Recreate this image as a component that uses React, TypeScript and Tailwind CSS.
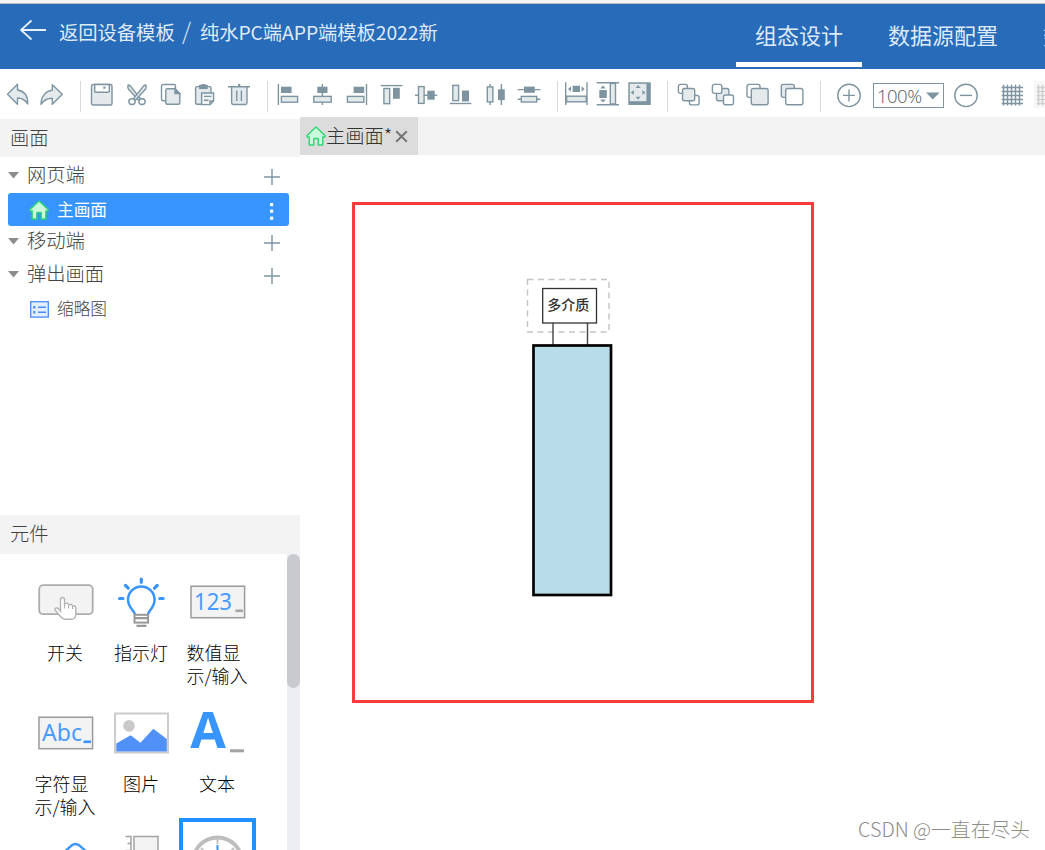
import React from 'react';

const LINE = '#7e95a1';
const FILL = '#e4eaec';

type ToolIconProps = {
  className?: string;
  children: React.ReactNode;
};

const ToolIcon: React.FC<ToolIconProps> = ({ className = '', children }) => (
  <svg
    width={24}
    height={24}
    viewBox="0 0 24 24"
    fill="none"
    stroke={LINE}
    strokeWidth={1.4}
    className={`shrink-0 overflow-visible ${className}`}
  >
    {children}
  </svg>
);

const Separator: React.FC<{ className: string }> = ({ className }) => (
  <div className={`-mt-0.5 h-[31px] w-px shrink-0 bg-[#d9d9d9] ${className}`} />
);

const Header: React.FC = () => (
  <header className="shrink-0 flex h-[69px] flex-col bg-[#276bb9] font-normal text-[#dfeaf8]">
    <div className="h-[3px] shrink-0 bg-[#f3f3f3]" />
    <div className="h-px shrink-0 bg-[#b5bcc3]" />
    <div className="flex flex-1 overflow-hidden">
      <div className="flex w-[736px] shrink-0 items-start pt-[15px] pl-5">
        <svg width="26" height="22" viewBox="0 0 26 22" fill="none" stroke="#e9f1fb" strokeWidth="1.8" className="shrink-0">
          <path d="M26 11H1M11.5 1.5L1 11L11.5 20.5" />
        </svg>
        <div className="ml-[13px] flex pt-px text-[19.3px] leading-6 whitespace-nowrap">
          <span className="w-[123px]">返回设备模板</span>
          <span className="w-[18px] -mt-0.5 text-[23px] font-light">/</span>
          <span className="tracking-[-0.05px]">纯水PC端APP端模板2022新</span>
        </div>
      </div>
      <div className="flex w-[126px] shrink-0 flex-col items-center pt-[14px] text-[22px] leading-8">
        组态设计
        <div className="mt-3 h-[5px] w-full shrink-0 bg-white" />
      </div>
      <div className="ml-[26px] w-[155px] shrink-0 pt-[14px] text-[22px] leading-8">数据源配置</div>
      <div className="shrink-0 pt-[14px] text-[22px] leading-8">数据</div>
    </div>
  </header>
);

const Toolbar: React.FC = () => (
  <div className="shrink-0 flex h-12 items-start overflow-hidden bg-white pt-[14px] pl-1.5">
    <ToolIcon>
      <path d="M1.5 11.3L11.5 1.3V7C18 8 22 13 21.7 21C19 16.5 16 15 11.5 15V21.2Z" fill={FILL} strokeLinejoin="round" />
    </ToolIcon>
    <ToolIcon className="ml-2.5">
      <path d="M22.3 11.3L12.3 1.8V7.3C5.5 8 1.2 13.5 1 21.3C4 16.8 7.5 15.3 12.3 15.3V21.3Z" fill={FILL} strokeLinejoin="round" />
    </ToolIcon>

    <Separator className="ml-4" />
    <ToolIcon className="ml-[9px]">
      <rect x="1.5" y="1.5" width="20.5" height="20.5" rx="1.5" fill={FILL} />
      <path d="M4.7 1.5V8Q4.7 9.2 6 9.2H18Q19.3 9.2 19.3 8V1.5Z" fill="#fff" />
      <rect x="13.3" y="3.6" width="2.2" height="2.2" fill={LINE} stroke="none" />
    </ToolIcon>
    <ToolIcon className="ml-[11px]">
      <path d="M3.3 1.8Q2 5 4.5 7.3L13.5 17L15.6 15.8L5 2.5Z" fill={FILL} />
      <path d="M20.7 1.8Q22 5 19.5 7.3L10.5 17L8.4 15.8L19 2.5Z" fill={FILL} />
      <ellipse cx="7" cy="18.6" rx="3.2" ry="2.9" fill="#fff" />
      <ellipse cx="17" cy="18.6" rx="3.2" ry="2.9" fill="#fff" />
    </ToolIcon>
    <ToolIcon className="ml-2.5">
      <path d="M6.5 17.8H4Q2.5 17.8 2.5 16.3V3Q2.5 1.5 4 1.5H15Q16.5 1.5 16.5 3V6" />
      <path d="M6.8 7.3Q6.8 5.8 8.3 5.8H16L20.8 10.5V19.8Q20.8 21.3 19.3 21.3H8.3Q6.8 21.3 6.8 19.8Z" fill={FILL} />
      <path d="M16 5.8V10.5H20.8Z" fill={LINE} />
    </ToolIcon>
    <ToolIcon className="ml-2.5">
      <rect x="2.6" y="3.6" width="15.4" height="17.6" rx="1.5" fill={FILL} />
      <rect x="6.8" y="2.4" width="7.2" height="3" fill={LINE} />
      <rect x="8.8" y="1" width="3.2" height="2" fill={LINE} stroke="none" />
      <path d="M8.6 10H20.6V18L17 21.6H8.6Z" fill="#eef2f3" />
      <path d="M20.6 18H17V21.6M11 13.4H18.3M11 17.2H15.5" />
    </ToolIcon>
    <ToolIcon className="ml-2.5">
      <path d="M4.6 3.8V19.8Q4.6 21.5 6.3 21.5H18.3Q20 21.5 20 19.8V3.8" fill={FILL} />
      <path d="M1 3.8H23M9.8 7.5V18M14.4 7.5V18" />
      <rect x="11" y="1" width="2.3" height="2.5" fill={LINE} stroke="none" />
    </ToolIcon>

    <Separator className="ml-4" />
    <ToolIcon className="ml-2">
      <path d="M2.4 1V22" />
      <rect x="5" y="3.7" width="10.6" height="6.3" fill={LINE} stroke="none" />
      <rect x="5.4" y="13.4" width="16.2" height="5.8" fill={FILL} />
    </ToolIcon>
    <ToolIcon className="ml-2.5">
      <path d="M12.4 1V22" />
      <rect x="7.3" y="3.7" width="10.2" height="6.3" fill={LINE} stroke="none" />
      <rect x="3.8" y="13.4" width="17.4" height="5.8" fill={FILL} />
    </ToolIcon>
    <ToolIcon className="ml-2.5">
      <path d="M22.5 1V22" />
      <rect x="9.6" y="3.7" width="10.6" height="6.3" fill={LINE} stroke="none" />
      <rect x="3.4" y="13.4" width="16.4" height="5.8" fill={FILL} />
    </ToolIcon>
    <ToolIcon className="ml-3">
      <path d="M0.7 2.6H22.4" />
      <rect x="3.9" y="5.5" width="5.8" height="15.2" fill={FILL} />
      <rect x="13" y="4.8" width="6.8" height="11" fill={LINE} stroke="none" />
    </ToolIcon>
    <ToolIcon className="ml-2.5">
      <path d="M1 12.3H23.3" />
      <rect x="4.5" y="3.6" width="5.6" height="16.8" fill={FILL} />
      <rect x="13.3" y="7.7" width="7.4" height="9" fill={LINE} stroke="none" />
    </ToolIcon>
    <ToolIcon className="ml-2.5">
      <path d="M1.7 20.5H23.3" />
      <rect x="4.8" y="2.4" width="5.8" height="15.2" fill={FILL} />
      <rect x="14" y="7.5" width="7" height="11" fill={LINE} stroke="none" />
    </ToolIcon>
    <ToolIcon className="ml-[11px]">
      <path d="M7.1 1V22M18.4 1V22" />
      <rect x="4.3" y="3.9" width="5.6" height="15" fill={FILL} />
      <rect x="15" y="6.3" width="6.8" height="10.8" fill={LINE} stroke="none" />
    </ToolIcon>
    <ToolIcon className="ml-2.5">
      <path d="M0.7 6.6H23.3M0.7 16.2H23.3" />
      <rect x="7" y="3.6" width="10.8" height="6.2" fill={LINE} stroke="none" />
      <rect x="4.3" y="13.4" width="15.4" height="5.6" fill={FILL} />
    </ToolIcon>

    <Separator className="ml-4" />
    <ToolIcon className="ml-1.5">
      <path d="M1.7 -0.7V22M23 -0.7V22" />
      <rect x="2.6" y="13.2" width="19.6" height="5.6" fill={FILL} />
      <path d="M8.6 2.7H16V9H8.6ZM7 3.2V8.8L4 6ZM17.6 3.2V8.8L20.6 6Z" fill={LINE} stroke="none" />
    </ToolIcon>
    <ToolIcon className="ml-2">
      <path d="M0.7 -0.3H23M0.7 21.7H23" />
      <rect x="14.3" y="0.4" width="5.2" height="20.6" fill={FILL} />
      <path d="M3.3 7H10.8V15H3.3ZM4.2 5.4H9.8L7 2.4ZM4.2 16.6H9.8L7 19.6Z" fill={LINE} stroke="none" />
    </ToolIcon>
    <ToolIcon className="ml-2">
      <rect x="0.3" y="-0.7" width="22.5" height="22.7" fill={LINE} stroke="none" />
      <rect x="1.8" y="0.8" width="16.6" height="17.4" fill={FILL} stroke="none" />
      <path d="M7.6 5H12.6L10.1 2ZM7.6 13.8H12.6L10.1 16.8ZM5.8 6.9V11.9L2.8 9.4ZM14.4 6.9V11.9L17.4 9.4Z" fill={LINE} stroke="none" />
    </ToolIcon>

    <Separator className="ml-[15px]" />
    <ToolIcon className="ml-[9px]">
      <rect x="1.4" y="1.4" width="9" height="9" rx="2" />
      <rect x="12.5" y="12.5" width="9.6" height="9.4" rx="2" />
      <rect x="5.5" y="5.5" width="12.2" height="12.2" rx="2" fill={FILL} />
    </ToolIcon>
    <ToolIcon className="ml-2.5">
      <rect x="5.5" y="5.5" width="12.4" height="12.2" rx="2" fill={FILL} />
      <rect x="1.4" y="1.4" width="9.4" height="9" rx="2" fill="#fff" />
      <rect x="12.5" y="12" width="10" height="9.8" rx="2" fill="#fff" />
    </ToolIcon>
    <ToolIcon className="ml-[11px]">
      <rect x="1" y="1.4" width="13" height="13" rx="2" />
      <rect x="5.3" y="5.5" width="16.8" height="16.3" rx="2" fill={FILL} />
    </ToolIcon>
    <ToolIcon className="ml-2.5">
      <rect x="1.3" y="1.4" width="13" height="13" rx="2" fill={FILL} />
      <rect x="5.7" y="5.5" width="17.2" height="16.3" rx="2" fill="#fff" />
    </ToolIcon>

    <Separator className="ml-4" />
    <ToolIcon className="ml-4">
      <circle cx="12" cy="12.4" r="11.2" />
      <path d="M6 12.4H18M12 6.4V18.4" />
    </ToolIcon>
    <div className="ml-3 flex h-[25px] w-[71px] shrink-0 items-center border border-[#7e95a1] pl-[3px] text-[18.5px] leading-5 tracking-[-0.5px] text-[#55595c]">
      <span className="w-[49px] font-['Open_Sans','Noto_Sans',sans-serif]">100%</span>
      <svg width="14" height="8" viewBox="0 0 14 8" className="shrink-0">
        <path d="M0 0.5H13.6L6.8 7.5Z" fill={LINE} />
      </svg>
    </div>
    <ToolIcon className="ml-2.5">
      <circle cx="12" cy="12.4" r="11.2" />
      <path d="M6 12.4H18" />
    </ToolIcon>
    <ToolIcon className="ml-[22px]">
      <path d="M3.5 1.7V22.5M7.5 1.7V22.5M11.5 1.7V22.5M15.5 1.7V22.5M19.5 1.7V22.5M1.7 4.5H23M1.7 8.5H23M1.7 12.5H23M1.7 16.5H23M1.7 20.5H23" strokeWidth="1.5" />
    </ToolIcon>
    <div className="-mt-[2px] ml-[10px] h-[27px] w-[30px] shrink-0 bg-[#f7f7f7] pt-0.5 pl-[1px]">
      <svg width="24" height="24" viewBox="0 0 24 24" fill="none" stroke="#cfcfcf" strokeWidth="1.5">
        <path d="M3.5 1.7V22.5M7.5 1.7V22.5M11.5 1.7V22.5M1.7 4.5H23M1.7 8.5H23M1.7 12.5H23M1.7 16.5H23M1.7 20.5H23" />
      </svg>
    </div>
  </div>
);

const HomeIcon: React.FC<{ size: number; className?: string }> = ({ size, className = '' }) => (
  <svg width={size} height={size} viewBox="0 0 20 20" className={`shrink-0 ${className}`}>
    <path
      d="M10 1L19 9.5V11H16.8V18.5Q16.8 19 16.3 19H12.3V13.2Q12.3 12.5 11.6 12.5H8.4Q7.7 12.5 7.7 13.2V19H3.7Q3.2 19 3.2 18.5V11H1V9.5Z"
      fill="#c8fadb"
      stroke="#2fd673"
      strokeWidth="1.4"
      strokeLinejoin="round"
    />
  </svg>
);

const TreeGroup: React.FC<{ label: string }> = ({ label }) => (
  <div className="flex h-[33px] items-center pl-2 text-[19.3px] leading-6 text-[#444]">
    <svg width="11" height="7" viewBox="0 0 11 7" className="mr-2 shrink-0">
      <path d="M0 0H11L5.5 6.6Z" fill="#8d8d8d" />
    </svg>
    <span className="-mt-[3px] w-[237px]">{label}</span>
    <svg width="16" height="16" viewBox="0 0 16 16" stroke={LINE} strokeWidth="1.4" className="mt-[3px] shrink-0">
      <path d="M0 8H16M8 0V16" />
    </svg>
  </div>
);

const PagesPanel: React.FC = () => (
  <div className="shrink-0 flex h-[398px] flex-col pt-0.5">
    <div className="h-[38px] shrink-0 bg-[#f3f3f3] pt-1.5 pl-[10px] text-[19.3px] leading-6 text-[#444]">画面</div>
    <div className="flex flex-col pt-0.5">
      <TreeGroup label="网页端" />
      <div className="mt-px ml-2 flex h-[33px] w-[281px] items-center rounded-[3px] bg-[#3895ff] pl-[21px] text-[16.7px] leading-6 font-normal text-white">
        <HomeIcon size={20} className="mt-px" />
        <span className="-mt-px ml-2 w-[213px]">主画面</span>
        <svg width="4" height="18" viewBox="0 0 4 18" fill="#fff" className="mt-1">
          <rect x="0" y="0" width="3.2" height="3.2" />
          <rect x="0" y="6.6" width="3.2" height="3.2" />
          <rect x="0" y="13.6" width="3.2" height="3.2" />
        </svg>
      </div>
      <div className="-mt-px">
        <TreeGroup label="移动端" />
      </div>
      <TreeGroup label="弹出画面" />
      <div className="flex h-[36px] items-center pl-[30px] text-[16.7px] leading-6 text-[#444]">
        <svg width="19" height="17" viewBox="0 0 19 17" fill="none" stroke="#4b8cf5" className="shrink-0">
          <rect x="0.7" y="0.7" width="17.6" height="15.4" fill="#e3eeff" strokeWidth="1.3" />
          <path d="M8 6.2H16M8 11.2H16" strokeWidth="1.5" />
          <path d="M3.2 6.2H5.4M3.2 11.2H5.4" strokeWidth="2.4" />
        </svg>
        <span className="-mt-0.5 ml-2">缩略图</span>
      </div>
    </div>
  </div>
);

const SwitchIcon = () => (
  <svg width="56" height="56" viewBox="0 0 56 56" className="ml-px shrink-0">
    <rect x="1.2" y="10.2" width="53.5" height="29" rx="4" fill="#f3f3f3" stroke="#adadad" strokeWidth="1.8" />
    <path
      d="M22.5 36V24.5Q22.5 22.5 24.5 22.5Q26.5 22.5 26.5 24.5V30Q27.2 27.6 29.2 28.2Q30.6 28.6 30.6 30Q33.5 28.2 34.6 31.3Q37.8 30 37.8 33.5V40Q37.3 44.2 33 44.3H27Q24.5 44.3 22.5 41.5L17 35Q16.3 32.6 19 33Q21 33.7 22.5 36Z"
      fill="#fff"
      stroke="#b3b3b3"
      strokeWidth="1.4"
    />
    <path d="M26.5 30V33.5M30.6 30V33.5M34.6 31.3V34" stroke="#b3b3b3" strokeWidth="1.2" />
  </svg>
);

const LampIcon = () => (
  <svg width="56" height="56" viewBox="0 0 56 56" fill="none" className="shrink-0">
    <path
      d="M22 39.5C22 36 15 33 15 24.8A13.3 13.3 0 0 1 41.6 24.8C41.6 33 35 36 35 39.5"
      stroke="#3895ff"
      strokeWidth="2.5"
    />
    <path
      d="M28.3 4.2V7.3M12.5 10.5L15.2 13.2M44.2 10.5L41.5 13.2M6.5 23.5H10M46.8 23.5H50.2"
      stroke="#3895ff"
      strokeWidth="3.2"
      strokeLinecap="round"
    />
    <rect x="21.5" y="39.8" width="13.6" height="7.8" stroke="#999" strokeWidth="2" />
    <path d="M21.5 43.2H35M23.5 50.8H33.5" stroke="#999" strokeWidth="2.2" />
  </svg>
);

type FieldIconProps = { text: string; width: number; caret: string };

const FieldIcon: React.FC<FieldIconProps> = ({ text, width, caret }) => (
  <svg width="56" height="56" viewBox="0 0 56 56" className="ml-px shrink-0">
    <rect x="1" y="11.2" width="53.6" height="31.5" fill="#f3f3f3" stroke="#9b9b9b" strokeWidth="1.5" />
    <text
      x="4"
      y="34.7"
      fontSize="23.5"
      fontWeight="400"
      fill="#4a9bff"
      fontFamily="Noto Sans, Open Sans, sans-serif"
      textLength={width}
      lengthAdjust="spacingAndGlyphs"
    >
      {text}
    </text>
    <rect x="45.5" y="34.5" width="7.5" height="2.6" fill={caret} />
  </svg>
);

const PictureIcon = () => (
  <svg width="56" height="56" viewBox="0 0 56 56" className="shrink-0">
    <rect x="2" y="7.5" width="53" height="39" fill="#fff" stroke="#ccc" strokeWidth="2" />
    <circle cx="16" cy="19.9" r="5.8" fill="#c9c9c9" />
    <path d="M3.3 37.5L17.6 29.2L27.5 36.8L40.3 22.8L53.8 33V45.5H3.3Z" fill="#5090f7" />
  </svg>
);

const TextIcon = () => (
  <svg width="56" height="56" viewBox="0 0 56 56" className="ml-px shrink-0 overflow-visible">
    <text
      x="0.3"
      y="42"
      fontSize="50"
      fontWeight="700"
      fill="#3895ff"
      fontFamily="Open Sans, Noto Sans, sans-serif"
      textLength="35.6"
      lengthAdjust="spacingAndGlyphs"
    >
      A
    </text>
    <rect x="40" y="43.3" width="14" height="3" fill="#a3a3a3" />
  </svg>
);

const components = [
  { id: 'switch', label: ['开关'], icon: <SwitchIcon /> },
  { id: 'lamp', label: ['指示灯'], icon: <LampIcon /> },
  { id: 'number', label: ['数值显', '示/输入'], icon: <FieldIcon text="123" width={38} caret="#a3a3a3" /> },
  { id: 'string', label: ['字符显', '示/输入'], icon: <FieldIcon text="Abc" width={40} caret="#3895ff" /> },
  { id: 'picture', label: ['图片'], icon: <PictureIcon /> },
  { id: 'text', label: ['文本'], icon: <TextIcon /> },
];

const ComponentsPanel: React.FC = () => (
  <div className="flex min-h-0 flex-1 flex-col">
    <div className="h-[39px] shrink-0 bg-[#f3f3f3] pt-1.5 pl-[10px] text-[19.3px] leading-6 text-[#444]">元件</div>
    <div className="flex min-h-0 flex-1">
      <div className="grid w-[287px] shrink-0 auto-rows-[131px] grid-cols-[76px_76px_76px] content-start overflow-hidden pt-[21px] pl-[27px]">
        {components.map(item => (
          <div key={item.id} className="flex flex-col items-center">
            {item.icon}
            <div className="mt-[10px] text-[18px] leading-[23px] whitespace-nowrap text-black">
              {item.label.map(line => (
                <div key={line}>{line}</div>
              ))}
            </div>
          </div>
        ))}
        <div className="flex justify-center pt-1">
          <svg width="60" height="40" viewBox="0 0 60 40" fill="none" stroke="#3895ff" strokeWidth="2.4">
            <path d="M28 12L37 4.2Q40.5 1.6 44 4.2L53 12" />
          </svg>
        </div>
        <div className="flex justify-center">
          <svg width="60" height="40" viewBox="0 0 60 40" fill="none" stroke="#a3a3a3" strokeWidth="1.5" className="overflow-visible">
            <path d="M14.5 -0.5H20V20M16.5 6.5H20M14.5 13.5H20" />
            <rect x="23" y="-0.5" width="24" height="30" fill="#f3f3f3" />
          </svg>
        </div>
        <div className="-mt-[19px] h-[77px] w-[77px] border-4 border-[#1f92ff] bg-white">
          <svg width="69" height="69" viewBox="0 0 69 69" fill="none">
            <circle cx="34.5" cy="40" r="24.5" stroke="#bdbdbd" strokeWidth="3.8" />
            <path d="M34.5 17V22M18 26L21 29M51 26L48 29" stroke="#bdbdbd" strokeWidth="1.8" />
            <path d="M34.5 23V40" stroke="#3895ff" strokeWidth="2" />
          </svg>
        </div>
      </div>
      <div className="w-[13px] shrink-0 bg-[#edeef2]">
        <div className="h-[134px] w-[13px] rounded-full bg-[#c9cad0]" />
      </div>
    </div>
  </div>
);

const Canvas: React.FC = () => (
  <div className="flex flex-1 flex-col pt-[47px] pl-[52px]">
    <div className="h-[501px] w-[462px] border-[3px] border-[#f93b3b]">
      {/* multi-media filter tank with its label plate */}
      <svg width="456" height="495" viewBox="355 205 456 495" fill="none">
        <rect x="527.5" y="279.5" width="81.5" height="52.5" stroke="#c4c4c4" strokeWidth="1.4" strokeDasharray="6 4.5" />
        <path d="M553 323V346M587.5 323V346" stroke="#444" strokeWidth="1.4" />
        <rect x="542.7" y="288.5" width="53.8" height="34.5" fill="#fff" stroke="#333" strokeWidth="1.3" />
        <text
          x="547.3"
          y="310.3"
          fontSize="14"
          fontWeight="500"
          fill="#333"
          fontFamily="Noto Sans CJK SC, sans-serif"
        >
          多介质
        </text>
        <rect x="533.5" y="345.5" width="77.5" height="249.5" fill="#b8dde8" stroke="#000" strokeWidth="2.7" />
      </svg>
    </div>
    <div className="mt-[114px] flex justify-end pr-[15px]">
      <span className="text-[19.8px] leading-6 text-[#8c8c8c]">CSDN @一直在尽头</span>
    </div>
  </div>
);

const Workspace: React.FC = () => (
  <main className="flex min-w-0 flex-1 flex-col">
    <div className="shrink-0 flex h-[38px] bg-[#f3f3f3]">
      <div className="flex w-[118px] items-center bg-[#dcdcdc] pl-1.5 text-[19.3px] leading-6 whitespace-nowrap text-[#333]">
        <HomeIcon size={20} />
        <span className="-mt-0.5 w-[69px]">主画面*</span>
        <svg width="13" height="13" viewBox="0 0 13 13" stroke="#777" strokeWidth="2" className="shrink-0">
          <path d="M1.2 1.2L11.8 11.8M11.8 1.2L1.2 11.8" />
        </svg>
      </div>
    </div>
    <Canvas />
  </main>
);

const App: React.FC = () => (
  <div className="flex h-[850px] w-[1045px] flex-col overflow-hidden bg-white font-['Noto_Sans_CJK_SC',sans-serif] font-light">
    <Header />
    <Toolbar />
    <div className="flex min-h-0 flex-1">
      <aside className="flex w-[300px] shrink-0 flex-col">
        <PagesPanel />
        <ComponentsPanel />
      </aside>
      <Workspace />
    </div>
  </div>
);

export default App;
